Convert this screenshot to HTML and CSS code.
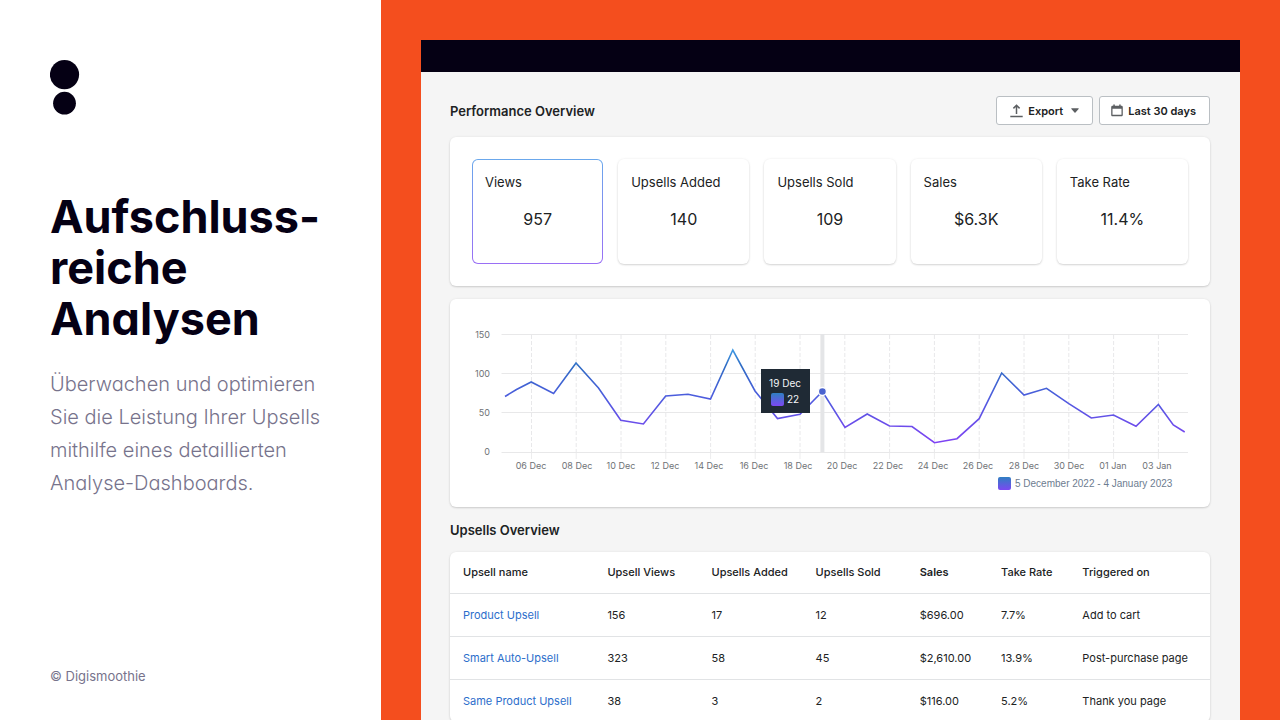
FILE: index.html
```html
<!DOCTYPE html>
<html lang="de">
<head>
<meta charset="utf-8">
<title>Aufschlussreiche Analysen</title>
<link rel="stylesheet" href="styles.css">
</head>
<body>
<div class="slide">
  <aside class="intro">
    <svg class="logo" viewBox="0 0 30 56" role="img" aria-label="Digismoothie">
      <circle cx="14.5" cy="14.6" r="14.6"/>
      <circle cx="14.5" cy="43.2" r="11.4"/>
    </svg>
    <h1 class="intro-title">Aufschluss-<br>reiche<br>Analysen</h1>
    <p class="intro-text">Überwachen und optimieren Sie die Leistung Ihrer Upsells mithilfe eines detaillierten Analyse-Dashboards.</p>
    <p class="copyright">© Digismoothie</p>
  </aside>
  <div class="stage">
    <main class="window" lang="en">
      <div class="window-bar"></div>
      <div class="content">
        <header class="toolbar">
          <h2 class="section-title">Performance Overview</h2>
          <div class="actions">
            <button class="button button-menu" type="button">
              <svg class="icon-export" viewBox="0 0 13 14" aria-hidden="true"><path d="M6.5 10V1.6M3.4 4.4 6.5 1.3l3.1 3.1M.3 12.6h12.4"/></svg>
              Export
              <svg class="icon-caret" viewBox="0 0 8 5" aria-hidden="true"><path d="M.8.3h6.4c.5 0 .7.5.4.8L4.5 4.6c-.3.3-.7.3-1 0L.4 1.1C.1.8.3.3.8.3Z"/></svg>
            </button>
            <button class="button" type="button">
              <svg class="icon-calendar" viewBox="0 0 12 13" aria-hidden="true"><path class="icon-fill" d="M2.3.5h1.5v1.3h4.4V.5h1.5v1.3h.8c.8 0 1.3.6 1.3 1.3v7.8c0 .8-.6 1.4-1.3 1.4h-9c-.8 0-1.3-.6-1.3-1.4V3.1c0-.7.5-1.3 1.3-1.3h.8ZM1.5 4.8v6h9v-6Z"/></svg>
              Last 30 days
            </button>
          </div>
        </header>

        <section class="card stats">
          <div class="stat stat-active"><span class="stat-label">Views</span><span class="stat-value">957</span></div>
          <div class="stat"><span class="stat-label">Upsells Added</span><span class="stat-value">140</span></div>
          <div class="stat"><span class="stat-label">Upsells Sold</span><span class="stat-value">109</span></div>
          <div class="stat"><span class="stat-label">Sales</span><span class="stat-value">$6.3K</span></div>
          <div class="stat"><span class="stat-label">Take Rate</span><span class="stat-value">11.4%</span></div>
        </section>

        <section class="card">
          <svg class="chart" viewBox="0 0 760 208" role="img" aria-label="Views per day">
            <defs>
              <linearGradient id="line" gradientUnits="userSpaceOnUse" x1="0" y1="50" x2="0" y2="144">
                <stop offset="0" stop-color="#409ce6"/>
                <stop offset=".18" stop-color="#2f6cc4"/>
                <stop offset=".5" stop-color="#4c5ddd"/>
                <stop offset="1" stop-color="#7f42f4"/>
              </linearGradient>
              <linearGradient id="swatch" x1="0" y1="0" x2="0" y2="1">
                <stop offset="0" stop-color="#2f7fc2"/>
                <stop offset="1" stop-color="#7c48f2"/>
              </linearGradient>
            </defs>
            <path class="grid" d="M51.5 35.5H738M51.5 74.5H738M51.5 113.5H738M51.5 153.5H738"/>
            <path class="grid-dash" d="M81.5 36V153M126.2 36V153M171 36V153M215.8 36V153M260.6 36V153M305.2 36V153M350 36V153M394.8 36V153M439.6 36V153M484.4 36V153M529.2 36V153M574 36V153M618.8 36V153M663.6 36V153M708.4 36V153"/>
            <path class="tick" d="M81.5 154V160M126.2 154V160M171 154V160M215.8 154V160M260.6 154V160M305.2 154V160M350 154V160M394.8 154V160M439.6 154V160M484.4 154V160M529.2 154V160M574 154V160M618.8 154V160M663.6 154V160M708.4 154V160"/>
            <path class="cursor" d="M372.4 35V153"/>
            <path class="series" d="M55 97.5 66.5 90.5 81.2 83 103.6 94.5 126 64 148.5 89 170.8 121.3 193.4 125 215.7 97 238 95.2 260.5 100 282.8 51 305 92 327.5 119.5 350 115.2 372.4 92.5 395 128.5 417.2 115 439.5 127 462 127.5 484.5 143.7 507 139.7 529.2 119.7 551.7 74 574 96 596.5 89.3 618.8 104.7 641.3 119 663.5 116 686 127.3 708.4 105.5 723.3 126 734.7 133"/>
            <circle class="marker" cx="372.4" cy="92.5" r="4"/>
            <g class="y-labels">
              <text x="40" y="39">150</text><text x="40" y="78">100</text><text x="40" y="117">50</text><text x="40" y="156">0</text>
            </g>
            <g class="x-labels">
              <text x="81" y="170">06 Dec</text><text x="127" y="170">08 Dec</text><text x="171" y="170">10 Dec</text><text x="215" y="170">12 Dec</text><text x="259" y="170">14 Dec</text><text x="304" y="170">16 Dec</text><text x="348" y="170">18 Dec</text><text x="392" y="170">20 Dec</text><text x="438" y="170">22 Dec</text><text x="483" y="170">24 Dec</text><text x="528" y="170">26 Dec</text><text x="574" y="170">28 Dec</text><text x="619" y="170">30 Dec</text><text x="663" y="170">01 Jan</text><text x="707" y="170">03 Jan</text>
            </g>
            <g class="legend">
              <rect x="548" y="178" width="13" height="13" rx="2" fill="url(#swatch)"/>
              <text x="565" y="188">5 December 2022 - 4 January 2023</text>
            </g>
            <g class="tooltip">
              <rect class="tooltip-box" x="311" y="70" width="49" height="44"/>
              <text x="335" y="88" text-anchor="middle">19 Dec</text>
              <rect x="321" y="94" width="13" height="13" rx="2" fill="url(#swatch)"/>
              <text x="337" y="104">22</text>
            </g>
          </svg>
        </section>

        <h2 class="section-title table-title">Upsells Overview</h2>
        <section class="card">
          <table class="table">
            <colgroup><col class="col-name"><col class="col-count"><col class="col-count"><col class="col-count"><col class="col-sales"><col class="col-sales"><col></colgroup>
            <thead>
              <tr><th>Upsell name</th><th>Upsell Views</th><th>Upsells Added</th><th>Upsells Sold</th><th class="sorted">Sales</th><th>Take Rate</th><th>Triggered on</th></tr>
            </thead>
            <tbody>
              <tr><td><a href="#">Product Upsell</a></td><td>156</td><td>17</td><td>12</td><td>$696.00</td><td>7.7%</td><td>Add to cart</td></tr>
              <tr><td><a href="#">Smart Auto-Upsell</a></td><td>323</td><td>58</td><td>45</td><td>$2,610.00</td><td>13.9%</td><td>Post-purchase page</td></tr>
              <tr><td><a href="#">Same Product Upsell</a></td><td>38</td><td>3</td><td>2</td><td>$116.00</td><td>5.2%</td><td>Thank you page</td></tr>
            </tbody>
          </table>
        </section>
      </div>
    </main>
  </div>
</div>
</body>
</html>
```
FILE: styles.css
```css
* { box-sizing: border-box; }

body {
  margin: 0;
  font-family: Inter, "Liberation Sans", sans-serif;
  color: #202223;
}

h1, h2, p { margin: 0; }

.slide {
  display: flex;
  height: 100vh;
  overflow: hidden;
}

.intro {
  flex: 0 0 381px;
  display: flex;
  flex-direction: column;
  align-items: flex-start;
  padding: 60px 50px 35px;
  background: #fff;
  color: #77738c;
  font-feature-settings: "cv11";
}

.logo {
  width: 30px;
  height: 56px;
  fill: #050014;
}

.intro-title {
  margin-top: 75px;
  font-size: 45px;
  line-height: 51px;
  font-weight: 700;
  color: #050014;
  white-space: nowrap;
}

.intro-text {
  margin: 24px -10px 0 0;
  font-size: 20px;
  line-height: 33px;
  font-weight: 300;
}

.copyright {
  margin-top: auto;
  font-size: 13px;
  line-height: 18px;
}

.stage {
  flex: 1;
  min-width: 0;
  padding: 40px 40px 0;
  background: #f44e1e;
}

.window {
  min-height: 100%;
  background: #f5f5f5;
}

.window-bar {
  height: 32px;
  background: #050014;
}

.content { padding: 24px 30px 24px 29px; }

.toolbar {
  display: flex;
  align-items: center;
  justify-content: space-between;
  margin-bottom: 12px;
}

.section-title {
  font-size: 13px;
  line-height: 20px;
  font-weight: 600;
}

.table-title { margin-bottom: 12px; }

.actions {
  display: flex;
  gap: 6px;
}

.button {
  display: flex;
  align-items: center;
  gap: 5px;
  height: 29px;
  padding: 0 13px 0 11px;
  border: 1px solid #babfc3;
  border-radius: 3px;
  background: #fff;
  color: #202223;
  font: 600 11px/16px Inter, "Liberation Sans", sans-serif;
}

.button-menu { padding-left: 13px; }

.button svg { flex: none; }

.icon-export {
  width: 13px;
  height: 14px;
  fill: none;
  stroke: #5c5f62;
  stroke-width: 1.5;
}

.icon-caret {
  width: 8px;
  height: 5px;
  margin-left: 3px;
  fill: #5c5f62;
}

.icon-calendar {
  width: 12px;
  height: 13px;
  fill: #5c5f62;
}

.icon-fill { fill-rule: evenodd; }

.card {
  margin-bottom: 13px;
  border-radius: 6px;
  background: #fff;
  box-shadow: 0 0 3px rgba(23, 24, 24, .06), 0 1px 2px rgba(0, 0, 0, .15);
}

.stats {
  display: grid;
  grid-template-columns: repeat(5, 1fr);
  gap: 15px;
  padding: 22px;
}

.stat {
  display: flex;
  flex-direction: column;
  gap: 16px;
  height: 105px;
  padding: 12px;
  border: 1px solid transparent;
  border-radius: 6px;
  background: #fff;
  box-shadow: 0 0 3px rgba(23, 24, 24, .06), 0 1px 2px rgba(0, 0, 0, .15);
}

.stat-active {
  background:
    linear-gradient(#fff, #fff) padding-box,
    linear-gradient(#6aa8ec, #9a6ff5) border-box;
  box-shadow: none;
}

.stat-label {
  font-size: 13px;
  line-height: 20px;
}

.stat-value {
  font-size: 16px;
  line-height: 22px;
  text-align: center;
}

.chart {
  display: block;
  width: 100%;
}

.grid, .grid-dash, .tick, .cursor, .series { fill: none; }
.grid { stroke: #e8e8e9; }
.grid-dash { stroke: #e8e8ea; stroke-dasharray: 4 2; }
.tick { stroke: #ededee; }
.cursor { stroke: #e4e5e7; stroke-width: 4; }
.series { stroke: url(#line); stroke-width: 1.6; }
.marker { fill: #4a63ce; stroke: #fff; stroke-width: 1.4; }

.y-labels, .x-labels {
  font-size: 9px;
  fill: #6f7276;
}

.y-labels { text-anchor: end; }
.x-labels { text-anchor: middle; }

.legend {
  font-family: "Liberation Sans", sans-serif;
  font-size: 10px;
  fill: #6d7c90;
}

.tooltip {
  font-size: 10px;
  fill: #f4f6f8;
}

.tooltip-box { fill: #1f2a35; }

.table {
  width: 100%;
  table-layout: fixed;
  border-collapse: collapse;
  font-size: 11px;
  line-height: 16px;
}

.col-name { width: 19%; }
.col-count { width: 13.7%; }
.col-sales { width: 10.7%; }

.table th, .table td {
  height: 43px;
  padding: 0 0 0 13px;
  text-align: left;
  white-space: nowrap;
}

.table th {
  height: 41px;
  font-weight: 500;
}

.table .sorted { font-weight: 600; }

.table td { border-top: 1px solid #e1e3e5; }

.table a {
  color: #2c6ecb;
  text-decoration: none;
}
```
